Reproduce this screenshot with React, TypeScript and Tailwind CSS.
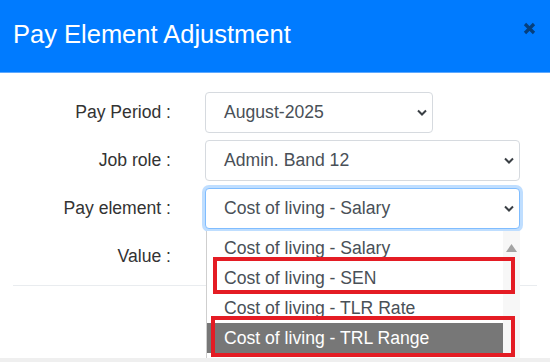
const fieldText = "text-[17.6px] text-[#495057]";

function Chevron() {
  return (
    <svg width="10" height="7" viewBox="0 0 10 7" className="shrink-0">
      <polyline points="1,1.5 5,5.5 9,1.5" fill="none" stroke="#3a3f44" strokeWidth="2" />
    </svg>
  );
}

function SelectBox({ value, width, focused }: { value: string; width: string; focused?: boolean }) {
  return (
    <div
      className={`${width} h-[41px] flex items-center justify-between pl-[18px] pr-[5px] rounded-[4px] bg-white border ${
        focused ? "border-[#80bdff] shadow-[0_0_0_3px_rgba(0,123,255,0.25)]" : "border-[#d6dadf]"
      }`}
    >
      <span className={fieldText}>{value}</span>
      <Chevron />
    </div>
  );
}

function FormRow({ label, children }: { label: string; children?: React.ReactNode }) {
  return (
    <div className="flex items-center h-[41px] mt-[7px] first:mt-0">
      <div className="w-[172px] text-right pr-[1px] text-[17.6px] text-[#333]">{label}</div>
      <div className="ml-[33px]">{children}</div>
    </div>
  );
}

const options = [
  "Cost of living - Salary",
  "Cost of living - SEN",
  "Cost of living - TLR Rate",
  "Cost of living - TRL Range",
];

export default function App() {
  return (
    <div className="relative w-[550px] h-[362px] overflow-hidden bg-white flex flex-col font-['Liberation_Sans',Arial,sans-serif]">
      {/* Modal header */}
      <div className="h-[73px] shrink-0 bg-[#007bff] border-b border-[#5ea9ff] flex items-center justify-between pl-[13px] pr-[14px]">
        <h4 className="text-[25.5px] text-white leading-none -mt-[2px]">Pay Element Adjustment</h4>
        <svg width="13" height="13" viewBox="0 0 13 13" className="-mt-[16px]">
          <path d="M2 2L11 11M11 2L2 11" stroke="#063f7c" strokeWidth="3.2" />
        </svg>
      </div>

      {/* Body */}
      <div className="flex-1 pt-[19px]">
        <FormRow label="Pay Period :">
          <SelectBox value="August-2025" width="w-[228px]" />
        </FormRow>
        <FormRow label="Job role :">
          <SelectBox value="Admin. Band 12" width="w-[315px]" />
        </FormRow>
        <FormRow label="Pay element :">
          <SelectBox value="Cost of living - Salary" width="w-[315px]" focused />
        </FormRow>
        <FormRow label="Value :" />
        <div className="mx-[13px] mt-[8px] border-t border-[#e9ecef]" />
      </div>

      <div className="h-[4px] shrink-0 bg-[#efefef]" />

      {/* Open dropdown list */}
      <div className="absolute left-[206px] top-[231px] w-[314px] h-[127px] bg-white border-l border-[#cfcfcf] flex overflow-hidden">
        <div className="w-[296px] pt-[2px]">
          {options.map((o, i) => (
            <div
              key={o}
              className={`h-[30px] flex items-center pl-[17px] text-[17.6px] ${
                i === 3 ? "bg-[#777] text-white" : "text-[#495057]"
              }`}
            >
              {o}
            </div>
          ))}
        </div>
        <div className="flex-1 bg-[#f7f7f7] flex justify-center pt-[13px]">
          <svg width="11" height="8" viewBox="0 0 11 8">
            <polygon points="5.5,0 11,8 0,8" fill="#a3a3a3" />
          </svg>
        </div>
      </div>

      {/* Annotation boxes */}
      <div className="absolute left-[213px] top-[257px] w-[302px] h-[37px] border-[4px] border-[#e41c24]" />
      <div className="absolute left-[211px] top-[316px] w-[304px] h-[41px] border-[4px] border-[#e41c24]" />
    </div>
  );
}
